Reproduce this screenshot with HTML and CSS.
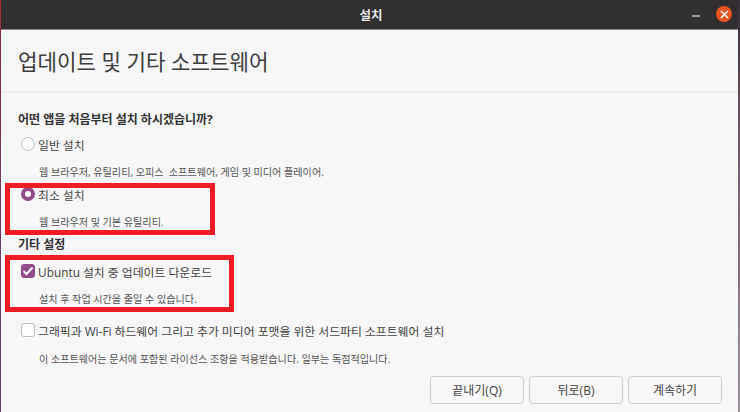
FILE: index.html
```html
<!DOCTYPE html>
<html lang="ko">
<head>
<meta charset="utf-8">
<title>설치</title>
<link rel="stylesheet" href="styles.css">
</head>
<body>
<div class="window">
  <header class="titlebar">
    <span class="titlebar-name">설치</span>
    <span class="minimize"></span>
    <span class="close">
      <svg width="9" height="9" viewBox="0 0 9 9"><path d="M1 1l7 7M8 1l-7 7" stroke="#fff" stroke-width="1.6" fill="none"/></svg>
    </span>
  </header>
  <main class="content">
    <h1 class="page-title">업데이트 및 기타 소프트웨어</h1>
    <div class="body">
      <h2 class="section first">어떤 앱을 처음부터 설치 하시겠습니까?</h2>
      <div class="option normal">
        <span class="radio"></span><span class="label">일반 설치</span>
      </div>
      <p class="hint hint-normal">웹 브라우저, 유틸리티, 오피스  소프트웨어, 게임 및 미디어 플레이어.</p>
      <div class="option minimal">
        <span class="radio checked"></span><span class="label">최소 설치</span>
      </div>
      <p class="hint hint-minimal">웹 브라우저 및 기본 유틸리티.</p>
      <h2 class="section other">기타 설정</h2>
      <div class="option update">
        <span class="check checked">
          <svg width="12" height="10" viewBox="0 0 12 10"><path d="M1.5 5l3 3 6-6.5" stroke="#fff" stroke-width="2" fill="none"/></svg>
        </span><span class="label">Ubuntu 설치 중 업데이트 다운로드</span>
      </div>
      <p class="hint hint-update">설치 후 작업 시간을 줄일 수 있습니다.</p>
      <div class="option third">
        <span class="check"></span><span class="label">그래픽과 Wi-Fi 하드웨어 그리고 추가 미디어 포맷을 위한 서드파티 소프트웨어 설치</span>
      </div>
      <p class="hint hint-third">이 소프트웨어는 문서에 포함된 라이선스 조항을 적용받습니다. 일부는 독점적입니다.</p>
      <div class="actions">
        <button class="btn">끝내기(Q)</button>
        <button class="btn">뒤로(B)</button>
        <button class="btn">계속하기</button>
      </div>
    </div>
  </main>
</div>
<div class="mark mark-one"></div>
<div class="mark mark-two"></div>
</body>
</html>
```
FILE: styles.css
```css
* { box-sizing: border-box; }
html, body {
  margin: 0;
  width: 740px;
  height: 412px;
  overflow: hidden;
}
body {
  position: relative;
  padding: 0 2px 0 1px;
  font-family: "Open Sans", "Noto Sans CJK KR", sans-serif;
  color: #3d3d3d;
  background:
    linear-gradient(#a8282f, #8a3450 12%, #6b3a6e 60%) left / 1px 100% no-repeat,
    linear-gradient(#3a2c34, #7a5f78 40%, #9a8a9a) right / 2px 100% no-repeat;
}
.window { height: 412px; display: flex; flex-direction: column; background: #f7f7f7; }
.titlebar {
  height: 30px;
  flex: none;
  background: #302e2e;
  border-bottom: 1px solid #8c8a88;
  position: relative;
  display: flex;
  align-items: center;
  justify-content: center;
}
.titlebar-name { color: #e8e8e8; font-size: 12.5px; font-weight: 700; margin-left: 3px; }
.minimize {
  position: absolute; left: 691px; top: 15px;
  width: 8px; height: 2px; background: #9a9a9a;
}
.close {
  position: absolute; left: 715px; top: 6px;
  width: 16px; height: 16px; border-radius: 50%;
  background: #e95420;
  display: flex; align-items: center; justify-content: center;
}
.content { flex: 1; display: flex; flex-direction: column; }
.page-title {
  margin: 0;
  height: 63px;
  flex: none;
  padding: 16px 0 0 17px;
  font-size: 21.2px;
  line-height: 32px;
  font-weight: 400;
  color: #3d3d3d;
  border-bottom: 2px solid #ececec;
}
.body { flex: 1; padding-left: 17px; display: flex; flex-direction: column; }
.section { margin: 0; font-size: 12px; line-height: 16px; font-weight: 700; color: #333; }
.section.first { margin-top: 19px; }
.section.other { margin-top: 8px; }
.option { display: flex; align-items: center; height: 18px; font-size: 11.85px; color: #444; }
.label { margin-left: 3px; white-space: pre; }
.radio, .check {
  width: 14px; height: 14px; flex: none; margin-left: 3px;
  background: #fff; border: 1px solid #bdbdbd;
  display: flex; align-items: center; justify-content: center;
}
.radio { border-radius: 50%; }
.check { border-radius: 3px; }
.radio.checked { background: #fff; border: 4.5px solid #924d8b; }
.check.checked { background: #924d8b; border-color: #924d8b; }
.hint { margin: 0; font-size: 10.1px; line-height: 14px; color: #555; padding-left: 21px; white-space: pre; }
.normal { margin-top: 7px; }
.hint-normal { margin-top: 12px; }
.minimal { margin-top: 6px; }
.hint-minimal { margin-top: 12px; }
.update { margin-top: 9px; }
.hint-update { margin-top: 12px; }
.third { margin-top: 15px; }
.hint-third { margin-top: 13px; }
.actions { display: flex; justify-content: flex-end; gap: 5px; margin-top: 10px; padding-right: 16px; }
.btn {
  width: 94px; height: 28px;
  background: #f8f8f8;
  border: 1px solid #cfcfcf;
  border-radius: 4px;
  font: inherit;
  font-size: 12px;
  color: #444;
  padding: 0;
}
.mark { position: absolute; border: 5px solid #ee1c25; }
.mark-one { left: 5px; top: 183px; width: 210px; height: 52px; }
.mark-two { left: 5px; top: 255px; width: 229px; height: 57px; }
```
